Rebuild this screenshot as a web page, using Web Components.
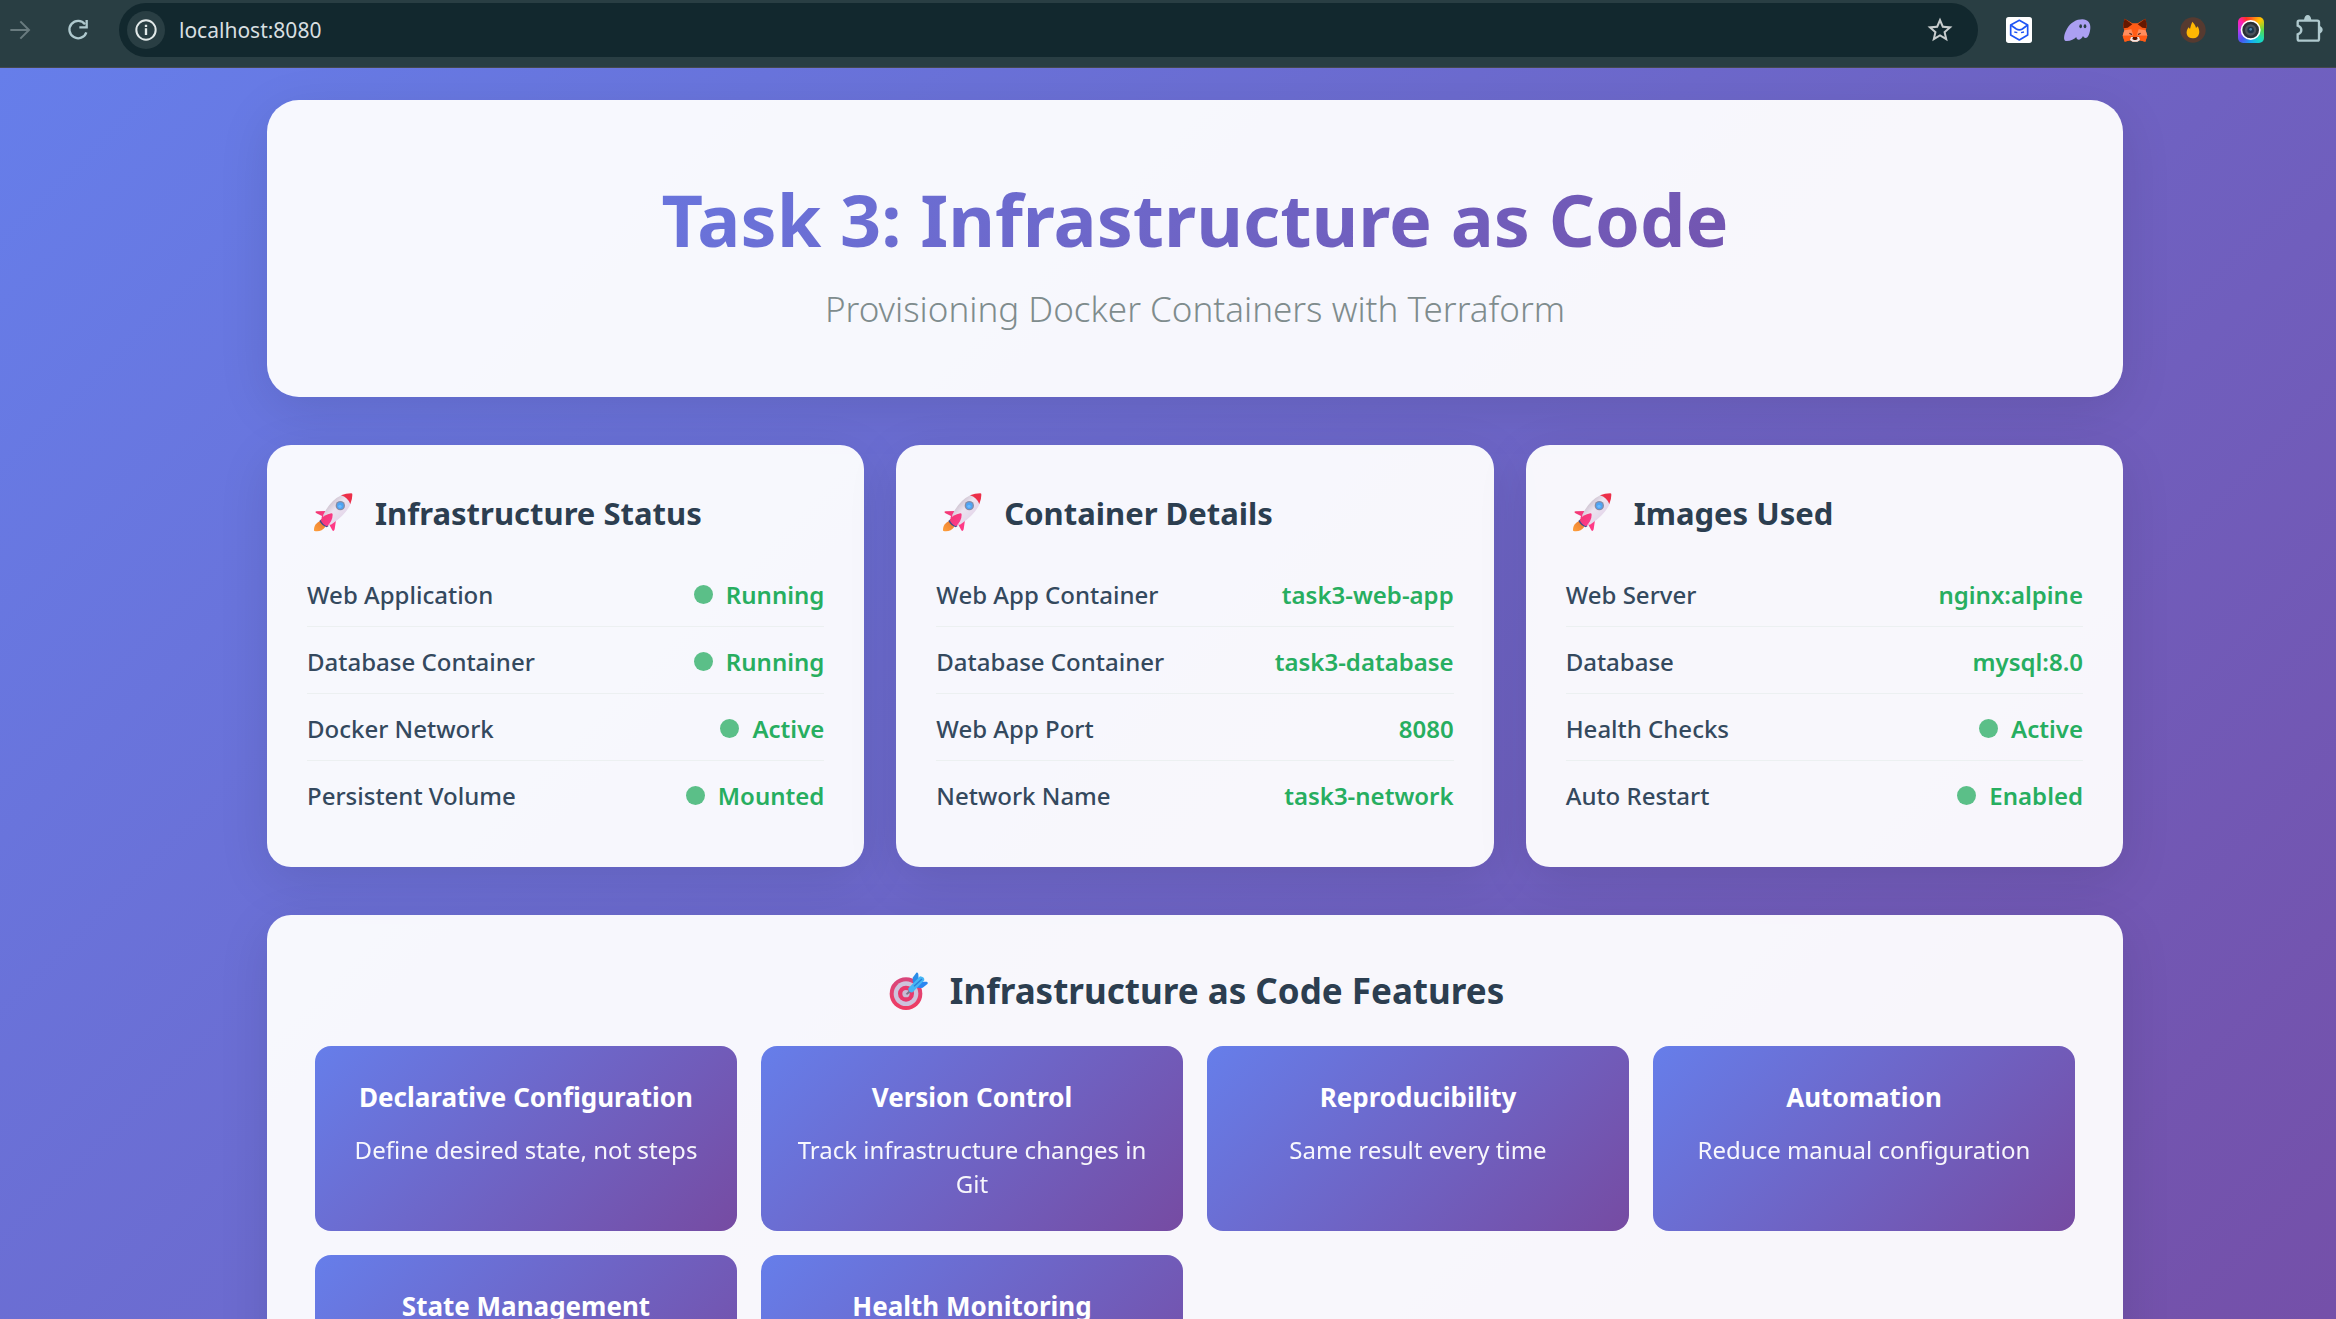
<!DOCTYPE html>
<html lang="en">
<head>
<meta charset="utf-8">
<meta name="viewport" content="width=device-width, initial-scale=1">
<title>Task 3: Infrastructure as Code</title>
<style>
  html, body { margin: 0; height: 100%; }
  body {
    --brand: linear-gradient(135deg, #667eea 0%, #764ba2 100%);
    --panel: rgba(255, 255, 255, 0.95);
    --ink: #2c3e50;
    font-family: "Noto Sans", "Open Sans", sans-serif;
    font-size: 24px;
    color: var(--ink);
    display: flex;
    flex-direction: column;
    overflow: hidden;
  }
</style>
</head>
<body>

<browser-bar url="localhost:8080"></browser-bar>

<page-view>
  <hero-panel>
    <span slot="title">Task 3: Infrastructure as Code</span>
    <span slot="subtitle">Provisioning Docker Containers with Terraform</span>
  </hero-panel>

  <card-grid>
    <status-card>
      <span slot="title">Infrastructure Status</span>
      <status-row dot>Web Application<span slot="value">Running</span></status-row>
      <status-row dot>Database Container<span slot="value">Running</span></status-row>
      <status-row dot>Docker Network<span slot="value">Active</span></status-row>
      <status-row dot>Persistent Volume<span slot="value">Mounted</span></status-row>
    </status-card>
    <status-card>
      <span slot="title">Container Details</span>
      <status-row>Web App Container<span slot="value">task3-web-app</span></status-row>
      <status-row>Database Container<span slot="value">task3-database</span></status-row>
      <status-row>Web App Port<span slot="value">8080</span></status-row>
      <status-row>Network Name<span slot="value">task3-network</span></status-row>
    </status-card>
    <status-card>
      <span slot="title">Images Used</span>
      <status-row>Web Server<span slot="value">nginx:alpine</span></status-row>
      <status-row>Database<span slot="value">mysql:8.0</span></status-row>
      <status-row dot>Health Checks<span slot="value">Active</span></status-row>
      <status-row dot>Auto Restart<span slot="value">Enabled</span></status-row>
    </status-card>
  </card-grid>

  <feature-panel>
    <span slot="title">Infrastructure as Code Features</span>
    <feature-tile><span slot="title">Declarative Configuration</span>Define desired state, not steps</feature-tile>
    <feature-tile><span slot="title">Version Control</span>Track infrastructure changes in Git</feature-tile>
    <feature-tile><span slot="title">Reproducibility</span>Same result every time</feature-tile>
    <feature-tile><span slot="title">Automation</span>Reduce manual configuration</feature-tile>
    <feature-tile><span slot="title">State Management</span></feature-tile>
    <feature-tile><span slot="title">Health Monitoring</span></feature-tile>
  </feature-panel>
</page-view>

<script>
const define = (name, markup, setup) => {
  const template = document.createElement('template');
  template.innerHTML = markup;
  customElements.define(name, class extends HTMLElement {
    constructor() {
      super();
      this.attachShadow({ mode: 'open' }).append(template.content.cloneNode(true));
    }
    connectedCallback() { if (setup) setup(this, this.shadowRoot); }
  });
};

define('rocket-icon', `
<style>:host { display: block; width: 52px; height: 52px; flex: none; } svg { display: block; width: 100%; height: 100%; }</style>
<svg viewBox="21 21 156 156" aria-hidden="true">
  <defs>
    <linearGradient id="body" x1="0" y1="0" x2="1" y2="1"><stop offset="0.1" stop-color="#b9abb9"/><stop offset="0.45" stop-color="#ece4f0"/><stop offset="1" stop-color="#dcc8e4"/></linearGradient>
    <linearGradient id="fin" x1="0" y1="0" x2="1" y2="1"><stop offset="0" stop-color="#f0386c"/><stop offset="1" stop-color="#ff3a94"/></linearGradient>
    <linearGradient id="fire" x1="0" y1="1" x2="1" y2="0"><stop offset="0" stop-color="#ffa03c"/><stop offset="1" stop-color="#e87a30"/></linearGradient>
  </defs>
  <path d="M60 124C50 127 41 138 42 152C54 156 68 152 76 140Z" fill="url(#fire)"/>
  <path d="M78 93L50 94Q44 95 48 99L66 108L64 116L76 112Z" fill="url(#fin)"/>
  <path d="M108 120L104 148Q101 156 97 151L88 134L82 136Z" fill="#ff3a86"/>
  <path d="M58 123L64 118L86 138L80 142Q66 137 58 123Z" fill="#3d4a8c"/>
  <path d="M125 45Q90 62 70 104Q68 116 80 130Q88 138 96 132Q138 104 153 70Q140 50 125 45Z" fill="url(#body)"/>
  <path d="M123 46Q138 40 154 40Q158 41 157 45Q157 58 151 72Q143 52 123 46Z" fill="#ec2f49"/>
  <path d="M62 120Q72 104 94 100Q98 100 98 104Q98 122 81 139Q67 133 62 120Z" fill="url(#fin)"/>
  <circle cx="121" cy="77" r="14" fill="#858ca6"/>
  <circle cx="121" cy="77" r="10" fill="#4ea3f3"/>
  <circle cx="120" cy="79" r="5" fill="#6bb9ff"/>
</svg>`);

define('target-icon', `
<style>:host { display: block; width: 56px; height: 56px; flex: none; } svg { display: block; width: 100%; height: 100%; }</style>
<svg viewBox="16 6 168 168" aria-hidden="true">
  <defs>
    <linearGradient id="red" x1="0" y1="0" x2="0" y2="1"><stop offset="0" stop-color="#d8467c"/><stop offset="1" stop-color="#f03c62"/></linearGradient>
  </defs>
  <circle cx="76" cy="98" r="49" fill="url(#red)"/>
  <circle cx="76" cy="98" r="37" fill="#cdc3dc"/>
  <circle cx="76" cy="98" r="24" fill="#e8386c"/>
  <circle cx="76" cy="98" r="11" fill="#c9bcd6"/>
  <path d="M75 99L92 81L98 87L80 101Z" fill="#7d7488"/>
  <path d="M96 50L107 35Q111 34 113 39L114 54L102 72Q94 62 96 50Z" fill="#2a8ce8"/>
  <path d="M121 62L138 62Q143 64 141 68L126 80Q114 82 104 78Z" fill="#2b86f0"/>
  <path d="M83 82L118 46Q132 48 131 58L96 94Q82 96 83 82Z" fill="#45b6f5"/>
  <path d="M100 76L124 54" stroke="#2a7fd8" stroke-width="4" fill="none"/>
</svg>`);

define('browser-bar', `
<style>
  :host { display: block; flex: none; }
  nav { display: flex; align-items: center; box-sizing: border-box; height: 68px; padding: 0 14px 7px 7px; background: #293e43; border-bottom: 1px solid #45484c; }
  button { display: block; flex: none; width: 26px; height: 26px; padding: 0; border: 0; background: none; color: #afc9ce; }
  svg { display: block; width: 100%; height: 100%; overflow: visible; }
  .history { display: flex; gap: 32px; margin-right: 28px; }
  .history button:disabled { color: #697b7f; }
  .omnibox { display: flex; align-items: center; flex: 1; box-sizing: border-box; height: 54px; padding: 0 23px 0 8px; border-radius: 27px; background: #12282e; }
  .omnibox .site { width: 38px; height: 38px; border-radius: 50%; background: #293e43; color: #e2e9e9; }
  .omnibox input { flex: 1; min-width: 0; margin: 0 14px; padding: 0; border: 0; outline: 0; background: none; font: 21px/30px "Noto Sans", "Open Sans", sans-serif; color: #d8dfe0; }
  .omnibox .star { width: 30px; height: 30px; color: #c7cccd; }
  .extensions { display: flex; gap: 32px; margin-left: 28px; }
  .camera { border-radius: 5px; background: conic-gradient(from 0deg, #ff5a1f, #ffc400 12%, #58d84a 25%, #16d9c4 38%, #17a8f5 50%, #4a55f0 62%, #b83af0 74%, #ff1fb0 86%, #ff3322 94%, #ff5a1f); }
</style>
<nav aria-label="Browser toolbar">
  <div class="history">
    <button disabled aria-label="Forward"><svg viewBox="0 0 78 78" fill="none" stroke="currentColor" stroke-width="6"><path d="M10 39H64M40 13L66 39L40 65"/></svg></button>
    <button aria-label="Reload"><svg viewBox="0 0 78 78" fill="none" stroke="currentColor" stroke-width="7"><path d="M60 22A26 26 0 1 0 64 46"/><path d="M65 9V31H43"/></svg></button>
  </div>
  <div class="omnibox">
    <button class="site" aria-label="Site information"><svg viewBox="0 0 114 114" fill="none" stroke="currentColor"><circle cx="57" cy="57" r="29" stroke-width="6"/><path d="M57 52V72M57 41V48" stroke-width="7"/></svg></button>
    <input type="text" aria-label="Address" spellcheck="false">
    <button class="star" aria-label="Bookmark this page"><svg viewBox="0 0 24 24" fill="currentColor"><path d="M22 9.240l-7.190-.62L12 2 9.190 8.630 2 9.240l5.460 4.730L5.820 21 12 17.270 18.180 21l-1.630-7.030L22 9.240zM12 15.400l-3.760 2.270 1-4.280-3.320-2.880 4.380-.38L12 6.100l1.710 4.040 4.380.38-3.320 2.880 1 4.280L12 15.400z"/></svg></button>
  </div>
  <div class="extensions">
    <button aria-label="Wallet"><svg viewBox="0 0 78 78"><rect width="78" height="78" rx="8" fill="#fff"/><g fill="none" stroke="#1f55f5" stroke-width="5" stroke-linejoin="round"><path d="M40 10L65 24V54L40 69L14 54V24Z"/><path d="M14 24L31 36Q40 41 49 36L65 24"/><path d="M25 45L34 47M45 47L54 45" stroke-width="4"/></g></svg></button>
    <button aria-label="Phantom"><svg viewBox="0 0 78 78"><path d="M6 72C-3 71-1 52 9 35C20 17 37 7 55 7C71 7 80 18 79 33C78 49 72 63 65 63C60 63 58 59 57 57C54 63 50 68 45 68C39 68 37 64 37 60C31 67 18 73 6 72Z" fill="#ab9ff2"/><ellipse cx="50" cy="28" rx="4" ry="6" fill="#293e43"/><ellipse cx="63" cy="28" rx="4" ry="6" fill="#293e43"/></svg></button>
    <button aria-label="MetaMask"><svg viewBox="0 0 78 78"><path d="M8 5L31 19H47L70 5L75 28L71 40L76 56L70 74L53 70L46 74H32L25 70L8 74L2 56L7 40L3 28Z" fill="#ff5c16"/><path d="M8 5L31 22L17 32L4 34Q2 20 8 5Z" fill="#661800"/><path d="M70 5L47 22L61 32L74 34Q76 20 70 5Z" fill="#661800"/><path d="M7 40L28 37L34 55L25 56L2 56ZM71 40L50 37L44 55L53 56L76 56Z" fill="#ff8d5d"/><path d="M21 47L31 51L29 54L23 51ZM57 47L47 51L49 54L55 51Z" fill="#3a1a12"/><path d="M2 56L25 56V70L8 74ZM76 56L53 56V70L70 74Z" fill="#ff5c16"/><path d="M27 60H51L54 69L46 74H32L24 69Z" fill="#f0e8e8"/><path d="M33 60H45L47 66L42 69H36L31 66Z" fill="#541400"/></svg></button>
    <button aria-label="Flame"><svg viewBox="0 0 78 78"><circle cx="39" cy="39" r="38" fill="#563a30"/><path d="M37 14C44 22 47 26 48 33L53 28C61 41 61 64 39 64C18 64 15 44 26 31L30 36C32 28 33 22 37 14Z" fill="#ffb703"/></svg></button>
    <button class="camera" aria-label="Camera"><svg viewBox="0 0 78 78"><circle cx="38" cy="39" r="30" fill="#fff"/><circle cx="38" cy="39" r="25" fill="#2b3036"/><circle cx="38" cy="39" r="17" fill="#4a535c"/><circle cx="38" cy="39" r="10" fill="#1c3448"/><circle cx="38" cy="37" r="4" fill="#4d86ad"/></svg></button>
    <button aria-label="Extensions"><svg viewBox="0 0 78 78"><path d="M9 11H64Q69 11 69 16V65Q69 71 64 71H10Q5 71 5 65V52Q16 48 16 39Q16 30 5 26V16Q5 11 9 11Z" fill="none" stroke="currentColor" stroke-width="7"/><path d="M24 9Q26-6 35-6Q44-6 46 9ZM70 26Q80 30 80 38Q80 46 70 50Z" fill="currentColor"/></svg></button>
  </div>
</nav>`, (host, root) => { root.querySelector('input').value = host.getAttribute('url'); });

define('page-view', `
<style>
  :host { display: block; flex: 1; min-height: 0; overflow: hidden; }
  .canvas { background: var(--brand); padding: 32px 32px 200px 86px; }
  main { display: flex; flex-direction: column; gap: 48px; max-width: 1856px; margin: 0 auto; }
</style>
<div class="canvas"><main><slot></slot></main></div>`);

define('hero-panel', `
<style>
  :host { display: block; }
  header { padding: 64px 64px 61px; border-radius: 32px; background: var(--panel); box-shadow: 0 13px 51px rgba(0, 0, 0, 0.1); text-align: center; }
  h1 { margin: 0 0 8px; font-size: 72px; line-height: 110px; font-weight: 700; color: transparent; background: var(--brand); -webkit-background-clip: text; background-clip: text; }
  p { margin: 0; font-size: 35px; line-height: 54px; font-weight: 300; color: #7f8c8d; }
</style>
<header><h1><slot name="title"></slot></h1><p><slot name="subtitle"></slot></p></header>`);

define('card-grid', `
<style>:host { display: grid; grid-template-columns: repeat(auto-fit, minmax(480px, 1fr)); gap: 32px; }</style>
<slot></slot>`);

define('status-card', `
<style>
  :host { display: block; box-sizing: border-box; padding: 40px; border-radius: 24px; background: var(--panel); box-shadow: 0 13px 51px rgba(0, 0, 0, 0.1); }
  .head { display: flex; align-items: center; gap: 16px; height: 56px; margin-bottom: 19px; }
  h3 { margin: 0; font-size: 31px; line-height: 44px; font-weight: 700; color: var(--ink); }
</style>
<div class="head"><rocket-icon></rocket-icon><h3><slot name="title"></slot></h3></div>
<slot></slot>`);

define('status-row', `
<style>
  :host { display: flex; justify-content: space-between; padding: 18px 0 14px; border-bottom: 1px solid #ecf0f1; line-height: 34px; }
  :host(:last-child) { border-bottom: 0; }
  .label { font-weight: 500; color: #34495e; }
  .value { font-weight: 600; color: #27ae60; }
  .dot { display: none; width: 19px; height: 19px; margin-right: 13px; border-radius: 50%; background: #5bbf88; }
  :host([dot]) .dot { display: inline-block; }
</style>
<span class="label"><slot></slot></span>
<span class="value"><span class="dot"></span><slot name="value"></slot></span>`);

define('feature-panel', `
<style>
  :host { display: block; box-sizing: border-box; padding: 48px; border-radius: 24px; background: var(--panel); box-shadow: 0 13px 51px rgba(0, 0, 0, 0.1); }
  .head { display: flex; justify-content: center; align-items: center; gap: 8px; height: 56px; margin-bottom: 27px; }
  h2 { margin: 0; font-size: 35px; line-height: 54px; font-weight: 700; color: var(--ink); }
  .tiles { display: grid; grid-template-columns: repeat(auto-fill, minmax(400px, 1fr)); grid-auto-rows: minmax(185px, auto); gap: 24px; }
</style>
<div class="head"><target-icon></target-icon><h2><slot name="title"></slot></h2></div>
<div class="tiles"><slot></slot></div>`);

define('feature-tile', `
<style>
  :host { display: block; box-sizing: border-box; padding: 32px 32px 30px; border-radius: 16px; background: var(--brand); color: #fff; text-align: center; }
  h4 { margin: 0 0 16px; font-size: 26px; line-height: 39px; font-weight: 700; }
  p { margin: 0; line-height: 34px; opacity: 0.95; }
</style>
<h4><slot name="title"></slot></h4><p><slot></slot></p>`);
</script>
</body>
</html>
